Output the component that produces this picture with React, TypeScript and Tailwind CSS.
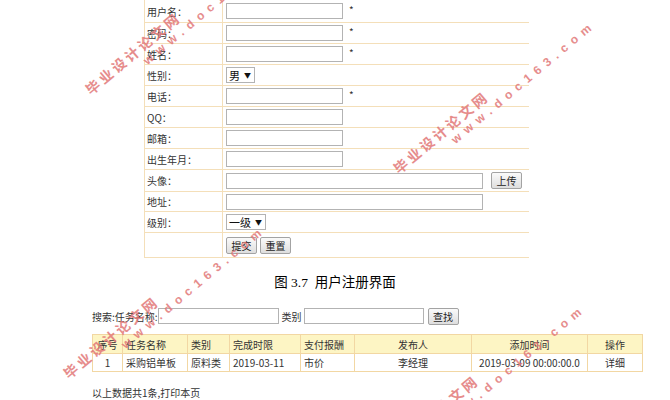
import React from "react";

const line = "border-[#f4dfb9]";

const Input = ({ wide }: { wide?: boolean }) => (
  <input
    type="text"
    readOnly
    className={
      wide
        ? "h-[16px] w-[257px] border border-[#b3b3b3] bg-white"
        : "h-[16px] w-[117px] border border-[#b3b3b3] bg-white"
    }
  />
);

const Btn = ({ children }: { children: React.ReactNode }) => (
  <button className="h-[17px] w-[31px] rounded-[2px] border border-[#a3a3a3] bg-gradient-to-b from-[#fafafa] to-[#dedede] text-[10px] leading-[15px] text-[#222]">
    {children}
  </button>
);

const Star = () => <span className="-mt-[4px] ml-[2px] text-[10px] text-[#333]">*</span>;

const FakeSelect = ({ value, w }: { value: string; w: string }) => (
  <div
    className={`flex h-[16px] items-center gap-[4px] border border-[#b3b3b3] bg-white pl-[2px] text-[11px] text-[#111] ${w}`}
  >
    <span>{value}</span>
    <span className="text-[7px]">▼</span>
  </div>
);

const FormRow = ({
  label,
  h,
  children,
}: {
  label: string;
  h: string;
  children?: React.ReactNode;
}) => (
  <div className={`flex border-b ${line} ${h}`}>
    <div className={`flex w-[78px] shrink-0 items-center border-r ${line} pl-[2px]`}>
      {label}
    </div>
    <div className="flex flex-1 items-center gap-[4px] pl-[3px]">{children}</div>
  </div>
);

// diagonal site watermark laid over the screenshot
const Watermark = ({ className }: { className: string }) => (
  <div
    className={`pointer-events-none absolute origin-top-left rotate-[-40deg] whitespace-nowrap font-bold text-[#e27878] opacity-85 ${className}`}
  >
    <div className="text-[14px] leading-[16px] tracking-[3px]">毕业设计论文网</div>
    <div className="ml-[63px] font-['Liberation_Sans',sans-serif] text-[12px] leading-[15px] tracking-[6px]">
      www.doc163.com
    </div>
  </div>
);

const cols = [
  { w: "w-[30px]", head: "序号", cell: "1", align: "text-center" },
  { w: "w-[65px]", head: "任务名称", cell: "采购铝单板", align: "text-left pl-[3px]" },
  { w: "w-[42px]", head: "类别", cell: "原料类", align: "text-left pl-[3px]" },
  { w: "w-[71px]", head: "完成时限", cell: "2019-03-11", align: "text-left pl-[3px]" },
  { w: "w-[54px]", head: "支付报酬", cell: "市价", align: "text-left pl-[3px]" },
  { w: "w-[117px]", head: "发布人", cell: "李经理", align: "text-center" },
  { w: "w-[116px]", head: "添加时间", cell: "2019-03-09 00:00:00.0", align: "text-center" },
  { w: "w-[55px]", head: "操作", cell: "详细", align: "text-center" },
];

export default function App() {
  return (
    <div className="relative h-[400px] w-[670px] overflow-hidden bg-white font-['Noto_Sans_CJK_SC',sans-serif] text-[10px] text-[#333]">
      <div className={`ml-[144px] w-[385px] border-l ${line}`}>
        <FormRow label="用户名：" h="h-[23px]">
          <Input />
          <Star />
        </FormRow>
        <FormRow label="密码：" h="h-[21px]">
          <Input />
          <Star />
        </FormRow>
        <FormRow label="姓名：" h="h-[21px]">
          <Input />
          <Star />
        </FormRow>
        <FormRow label="性别：" h="h-[21px]">
          <FakeSelect value="男" w="w-[29px]" />
        </FormRow>
        <FormRow label="电话：" h="h-[21px]">
          <Input />
          <Star />
        </FormRow>
        <FormRow label="QQ：" h="h-[21px]">
          <Input />
        </FormRow>
        <FormRow label="邮箱：" h="h-[21px]">
          <Input />
        </FormRow>
        <FormRow label="出生年月：" h="h-[21px]">
          <Input />
        </FormRow>
        <FormRow label="头像：" h="h-[22px]">
          <Input wide />
          <span className="ml-[4px]">
            <Btn>上传</Btn>
          </span>
        </FormRow>
        <FormRow label="地址：" h="h-[20px]">
          <Input wide />
        </FormRow>
        <FormRow label="级别：" h="h-[21px]">
          <FakeSelect value="一级" w="w-[40px]" />
        </FormRow>
        <FormRow label="" h="h-[25px]">
          <div className="flex gap-[3px]">
            <Btn>提交</Btn>
            <Btn>重置</Btn>
          </div>
        </FormRow>
      </div>

      <div className="mt-[15px] text-center font-['Liberation_Serif','Noto_Sans_CJK_SC',serif] text-[13.5px] leading-[20px] text-black">
        图 3.7&nbsp;&nbsp;用户注册界面
      </div>

      <div className="ml-[92px] mt-[15px] flex h-[16px] items-center">
        <span>搜索:任务名称:</span>
        <input
          type="text"
          readOnly
          className="h-[16px] w-[121px] border border-[#b3b3b3] bg-white"
        />
        <span className="ml-[3px]">类别</span>
        <input
          type="text"
          readOnly
          className="ml-[2px] h-[16px] w-[120px] border border-[#b3b3b3] bg-white"
        />
        <span className="ml-[4px]">
          <Btn>查找</Btn>
        </span>
      </div>

      <table className="ml-[92px] mt-[10px] w-[550px] table-fixed border-collapse border border-[#f2d7a3]">
        <colgroup>
          {cols.map((c) => (
            <col key={c.head} className={c.w} />
          ))}
        </colgroup>
        <thead>
          <tr className="h-[19px] bg-[#fdf5c4]">
            {cols.map((c) => (
              <th key={c.head} className={`border border-[#f2d7a3] font-normal ${c.align}`}>
                {c.head}
              </th>
            ))}
          </tr>
        </thead>
        <tbody>
          <tr className="h-[18px]">
            {cols.map((c) => (
              <td key={c.head} className={`border border-[#f2d7a3] ${c.align}`}>
                {c.cell}
              </td>
            ))}
          </tr>
        </tbody>
      </table>

      <div className="ml-[92px] mt-[13px] leading-[16px]">以上数据共1条,打印本页</div>

      <Watermark className="left-[82px] top-[85px]" />
      <Watermark className="left-[390px] top-[164px]" />
      <Watermark className="left-[60px] top-[369px]" />
      <Watermark className="left-[380px] top-[448px]" />
    </div>
  );
}
